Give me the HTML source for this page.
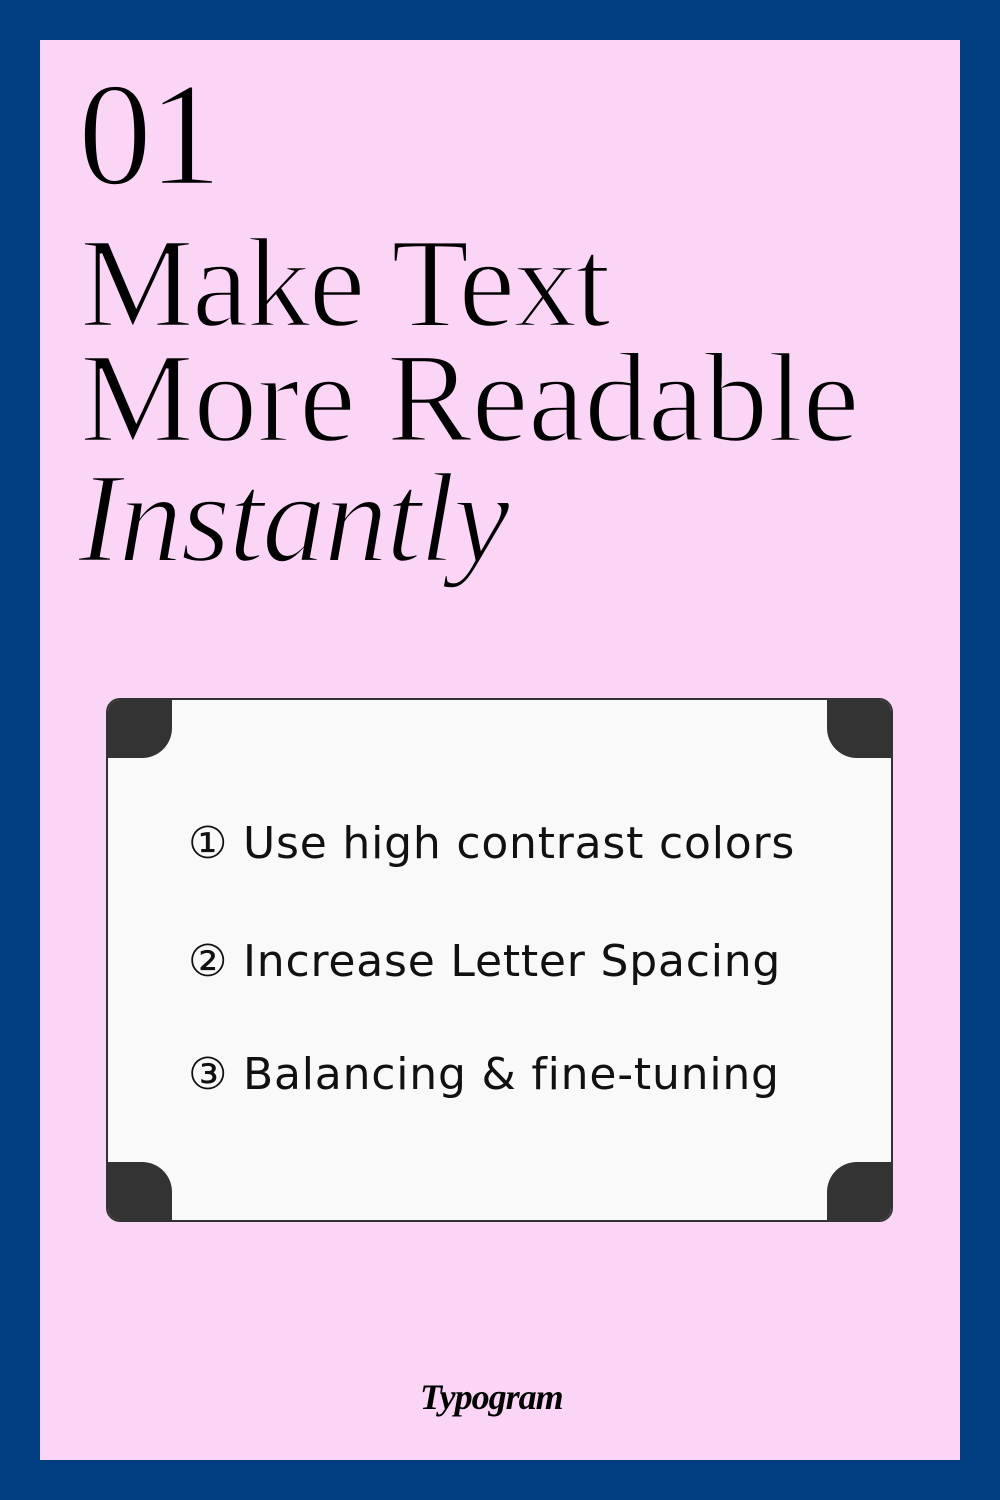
<!DOCTYPE html>
<html><head><style>
body{margin:0;width:1000px;height:1500px;background:#003d80;position:relative;overflow:hidden}
.pink{position:absolute;left:40px;top:40px;width:920px;height:1420px;background:#fbd5f5}
.t{position:absolute;font-family:"Liberation Serif",serif;color:#000;white-space:nowrap;font-weight:normal}
.h{-webkit-text-stroke:2.5px #fbd5f5}
.card{position:absolute;left:106px;top:698px;width:783px;height:520px;background:#f9f9f9;border:2px solid #333;border-radius:14px;overflow:hidden}
.c{position:absolute;width:64px;height:58px;background:#333}
.li{position:absolute;left:188px;font-family:"DejaVu Sans","Liberation Sans",sans-serif;font-size:44px;color:#111;white-space:nowrap;letter-spacing:0.8px}
</style></head><body>
<div class="pink"></div>
<div class="t h" style="left:78px;top:60px;font-size:148px;line-height:150px;letter-spacing:-4px">01</div>
<div class="t h" style="left:80px;top:218px;font-size:128px;line-height:130px;letter-spacing:-2px">Make Text</div>
<div class="t h" style="left:80px;top:333px;font-size:128px;line-height:130px;letter-spacing:-0.5px">More Readable</div>
<div class="t h" style="left:78px;top:453px;font-size:128px;line-height:130px;font-style:italic;letter-spacing:-2px">Instantly</div>
<div class="card">
<div class="c" style="left:0;top:0;border-bottom-right-radius:30px"></div>
<div class="c" style="right:0;top:0;border-bottom-left-radius:30px"></div>
<div class="c" style="left:0;bottom:0;border-top-right-radius:30px"></div>
<div class="c" style="right:0;bottom:0;border-top-left-radius:30px"></div>
</div>
<div class="li" style="top:818px">① Use high contrast colors</div>
<div class="li" style="top:936px">② Increase Letter Spacing</div>
<div class="li" style="top:1049px">③ Balancing &amp; fine-tuning</div>
<div class="t" style="left:420px;top:1376px;font-size:36px;font-style:italic;font-weight:bold;letter-spacing:-1px">Typogram</div>
</body></html>
